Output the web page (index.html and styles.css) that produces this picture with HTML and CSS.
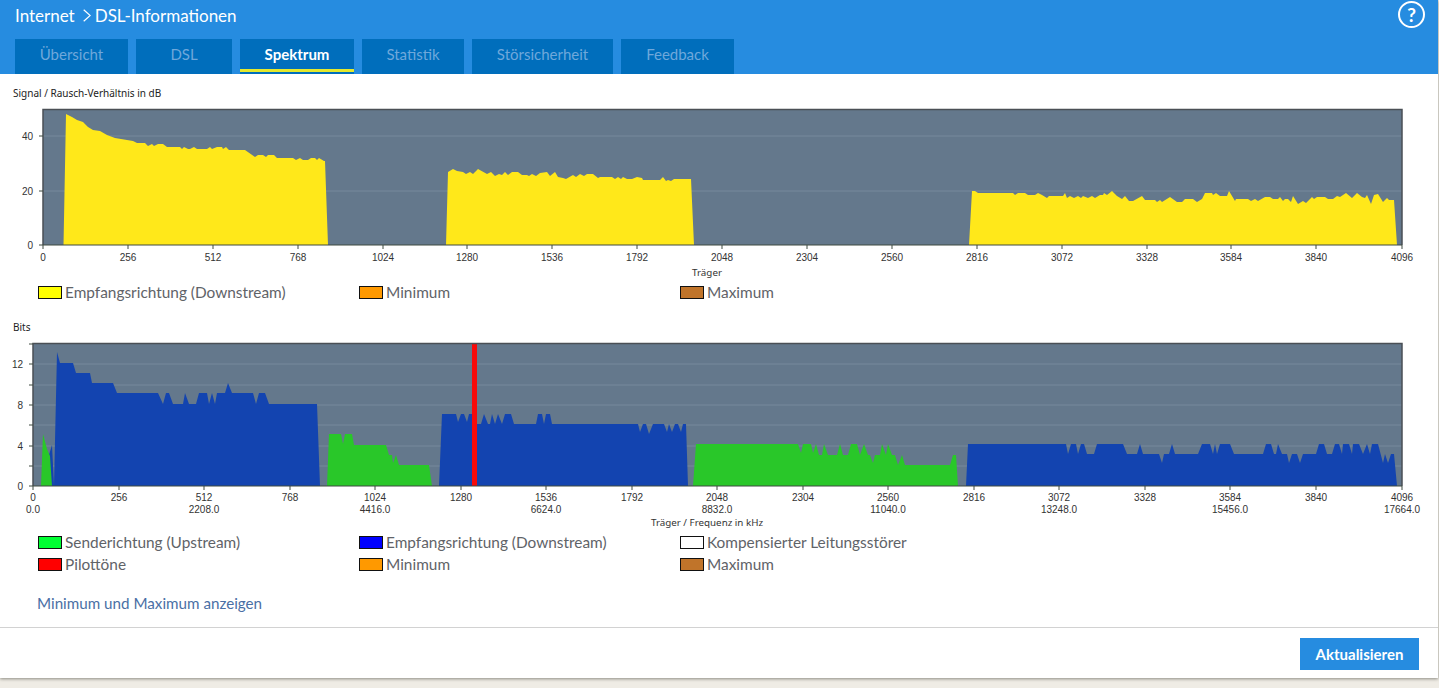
FILE: index.html
```html
<!DOCTYPE html>
<html lang="de">
<head>
<meta charset="utf-8">
<title>DSL-Informationen</title>
<link rel="stylesheet" href="styles.css">
</head>
<body>
<div class="card">
  <header class="head">
    <div class="title-row">
      <h1 class="crumbs"><span>Internet</span><svg class="chev" viewBox="0 0 8 13" width="8" height="13"><path d="M.7.7 7.2 6.5.7 12.3" fill="none" stroke="#fff" stroke-width="1.2"/></svg><span>DSL-Informationen</span></h1>
      <a class="help">?</a>
    </div>
    <nav class="tabs">
      <a class="tab">Übersicht</a>
      <a class="tab">DSL</a>
      <a class="tab active">Spektrum</a>
      <a class="tab">Statistik</a>
      <a class="tab">Störsicherheit</a>
      <a class="tab">Feedback</a>
    </nav>
  </header>
  <main class="content">
    <section class="chart-one">
      <div class="chart-title">Signal / Rausch-Verhältnis in dB</div>
      <svg class="plot plot-one" viewBox="0 102 1439 178" width="1439" height="178">
        <rect class="plot-bg" x="43" y="109" width="1359" height="136"/>
        <path class="grid" d="M43 191H1402M43 136H1402"/>
        <path class="yellow" d="M63.5 245 66 114 72 117 77 120 83 122 88 127 93 130 100 131 107 135 115 138 133 141 137 143 145 143 148 146 152 144 154 146 158 144 163 144 167 147 180 147 182 149 184 147 188 149 190 149 194 147 197 149 207 149 210 147 212 149 217 147 222 147 223 149 226 147 229 150 245 150 255 157 258 155 263 155 266 157 268 155 274 155 277 158 293 158 296 160 300 158 303 160 308 160 311 158 315 158 317 160 319 158 324 161 325 161 328 245Z"/>
        <path class="yellow" d="M446 245 448 172 453 169 457 171 463 172 466 174 470 172 473 174 478 169 487 174 491 172 495 176 499 174 502 175 505 172 508 175 512 172 518 172 522 175 527 175 529 176 532 174 536 176 540 173 547 172 550 176 555 172 558 177 563 178 566 179 573 175 576 177 580 174 584 176 587 174 593 174 598 178 600 177 612 177 615 179 618 177 621 179 623 177 627 179 632 179 637 177 642 178 643 180 660 180 663 177 666 181 668 180 671 181 674 179 691 179 694 245Z"/>
        <path class="yellow" d="M969 245 972 191 975 191 978 193 1013 193 1015 195 1018 193 1025 193 1028 195 1035 195 1038 193 1042 195 1047 198 1049 196 1063 196 1065 193 1067 198 1070 196 1074 198 1078 196 1081 198 1083 196 1088 198 1092 196 1095 198 1100 195 1103 195 1104 193 1107 195 1112 191 1117 196 1122 199 1125 196 1129 201 1133 201 1142 196 1145 200 1155 200 1157 202 1160 200 1162 202 1170 197 1177 202 1182 202 1185 199 1193 199 1197 202 1202 199 1205 193 1212 193 1213 195 1216 193 1220 196 1227 196 1229 191 1232 196 1235 201 1236 199 1248 199 1251 201 1255 199 1258 201 1265 197 1270 197 1273 199 1278 199 1280 197 1283 201 1285 199 1288 199 1291 202 1293 196 1298 204 1303 201 1306 203 1312 197 1314 199 1317 197 1325 197 1328 199 1333 199 1337 196 1340 197 1346 193 1352 198 1357 193 1362 197 1365 198 1367 195 1371 204 1374 195 1378 194 1383 202 1387 198 1389 200 1394 200 1397 245Z"/>
        <path class="frame" d="M43 245V109.5H1402V245"/>
        <path class="axis" d="M39 245H1402M39 191H43M39 136H43M43 245v4M128 245v4M213 245v4M298 245v4M383 245v4M467 245v4M552 245v4M637 245v4M722 245v4M807 245v4M892 245v4M977 245v4M1062 245v4M1147 245v4M1231 245v4M1316 245v4M1402 245v4"/>
        <g class="ylabels">
          <text x="33" y="140">40</text>
          <text x="33" y="195">20</text>
          <text x="33" y="249">0</text>
        </g>
        <g class="xlabels">
          <text x="43" y="261">0</text>
          <text x="128" y="261">256</text>
          <text x="213" y="261">512</text>
          <text x="298" y="261">768</text>
          <text x="383" y="261">1024</text>
          <text x="467" y="261">1280</text>
          <text x="552" y="261">1536</text>
          <text x="637" y="261">1792</text>
          <text x="722" y="261">2048</text>
          <text x="807" y="261">2304</text>
          <text x="892" y="261">2560</text>
          <text x="977" y="261">2816</text>
          <text x="1062" y="261">3072</text>
          <text x="1147" y="261">3328</text>
          <text x="1231" y="261">3584</text>
          <text x="1316" y="261">3840</text>
          <text x="1402" y="261">4096</text>
          <text class="axis-name" x="707" y="276">Träger</text>
        </g>
      </svg>
      <ul class="legend">
        <li class="legend-item"><i class="swatch sw-yellow"></i>Empfangsrichtung (Downstream)</li>
        <li class="legend-item"><i class="swatch sw-orange"></i>Minimum</li>
        <li class="legend-item"><i class="swatch sw-brown"></i>Maximum</li>
      </ul>
    </section>
    <section class="chart-two">
      <div class="chart-title">Bits</div>
      <svg class="plot plot-two" viewBox="0 336 1439 194" width="1439" height="194">
        <rect class="plot-bg" x="33" y="343" width="1369" height="143"/>
        <path class="grid" d="M33 466H1402M33 446H1402M33 425H1402M33 405H1402M33 385H1402M33 364H1402"/>
        <path class="blue" d="M46 486 49 455 52 445 54 486Z"/>
        <path class="green" d="M41 486 43 434 47 449 50 456 52 486Z"/>
        <path class="blue" d="M54 486 57 352 60 363 73 363 76 373 90 373 92 383 113 383 117 393 158 393 163 404 166 393 169 393 173 404 183 404 185 393 189 404 196 404 199 393 207 393 209 404 212 393 215 404 217 393 225 393 228 383 232 393 253 393 256 404 259 393 265 393 269 404 317 404 320 486Z"/>
        <path class="green" d="M327 486 329 434 341 434 343 444 345 434 352 434 354 445 386 445 389 455 392 455 393 463 396 455 399 465 429 465 432 486Z"/>
        <path class="blue" d="M439 486 442 414 456 414 458 422 461 414 464 414 467 422 469 414 473 414 477 424 481 424 484 414 488 424 490 424 492 414 495 424 498 414 502 424 505 414 511 414 514 424 536 424 538 414 542 414 544 424 546 414 550 414 552 424 638 424 640 432 643 424 646 424 649 434 653 424 664 424 667 432 669 424 672 432 675 424 678 424 681 432 683 424 686 424 688 486Z"/>
        <path class="green" d="M693 486 696 444 798 444 801 453 803 444 811 444 813 453 816 444 819 455 822 455 824 444 828 455 837 455 840 444 843 455 848 455 851 444 857 444 860 455 864 444 868 455 870 455 873 463 875 455 880 455 882 444 886 455 888 444 892 455 895 455 898 465 902 455 905 465 950 465 953 455 956 455 958 486Z"/>
        <path class="blue" d="M966 486 968 444 1066 444 1068 454 1071 444 1076 444 1078 454 1081 444 1084 444 1087 454 1094 454 1097 444 1123 444 1127 454 1137 454 1140 444 1143 454 1159 454 1162 463 1164 454 1169 454 1172 444 1175 454 1198 454 1202 444 1210 444 1213 454 1215 444 1217 454 1220 444 1230 444 1234 454 1263 454 1266 444 1271 444 1274 454 1276 454 1278 444 1282 454 1287 454 1289 463 1292 454 1297 454 1300 463 1303 454 1316 454 1319 444 1324 444 1327 454 1332 454 1335 444 1339 444 1342 454 1343 444 1349 444 1352 454 1353 444 1359 444 1363 454 1367 444 1370 454 1372 444 1378 444 1383 463 1385 454 1388 463 1391 454 1394 454 1397 486Z"/>
        <rect class="pilot" x="472" y="343" width="5" height="143"/>
        <path class="frame" d="M33 486V343.5H1402V486"/>
        <path class="axis" d="M29 486H1402M29 466H33M29 446H33M29 425H33M29 405H33M29 385H33M29 364H33M29 344H33M33 486v4M119 486v4M204 486v4M290 486v4M375 486v4M461 486v4M546 486v4M632 486v4M717 486v4M803 486v4M888 486v4M974 486v4M1059 486v4M1145 486v4M1230 486v4M1316 486v4M1402 486v4"/>
        <g class="ylabels">
          <text x="23" y="368">12</text>
          <text x="23" y="409">8</text>
          <text x="23" y="450">4</text>
          <text x="23" y="490">0</text>
        </g>
        <g class="xlabels">
          <text x="33" y="501">0</text>
          <text x="119" y="501">256</text>
          <text x="204" y="501">512</text>
          <text x="290" y="501">768</text>
          <text x="375" y="501">1024</text>
          <text x="461" y="501">1280</text>
          <text x="546" y="501">1536</text>
          <text x="632" y="501">1792</text>
          <text x="717" y="501">2048</text>
          <text x="803" y="501">2304</text>
          <text x="888" y="501">2560</text>
          <text x="974" y="501">2816</text>
          <text x="1059" y="501">3072</text>
          <text x="1145" y="501">3328</text>
          <text x="1230" y="501">3584</text>
          <text x="1316" y="501">3840</text>
          <text x="1402" y="501">4096</text>
          <text x="33" y="513">0.0</text>
          <text x="204" y="513">2208.0</text>
          <text x="375" y="513">4416.0</text>
          <text x="546" y="513">6624.0</text>
          <text x="717" y="513">8832.0</text>
          <text x="888" y="513">11040.0</text>
          <text x="1059" y="513">13248.0</text>
          <text x="1230" y="513">15456.0</text>
          <text x="1402" y="513">17664.0</text>
          <text class="axis-name" x="707" y="526">Träger / Frequenz in kHz</text>
        </g>
      </svg>
      <ul class="legend">
        <li class="legend-item"><i class="swatch sw-green"></i>Senderichtung (Upstream)</li>
        <li class="legend-item"><i class="swatch sw-blue"></i>Empfangsrichtung (Downstream)</li>
        <li class="legend-item"><i class="swatch sw-white"></i>Kompensierter Leitungsstörer</li>
        <li class="legend-item"><i class="swatch sw-red"></i>Pilottöne</li>
        <li class="legend-item"><i class="swatch sw-orange"></i>Minimum</li>
        <li class="legend-item"><i class="swatch sw-brown"></i>Maximum</li>
      </ul>
    </section>
    <a class="toggle">Minimum und Maximum anzeigen</a>
  </main>
  <footer class="foot">
    <button class="btn" type="button">Aktualisieren</button>
  </footer>
</div>
</body>
</html>
```
FILE: styles.css
```css
* { box-sizing: border-box; }
html, body { margin: 0; height: 688px; overflow: hidden; }
body {
  background: #efece5;
  font-family: "Lato", "Noto Sans", sans-serif;
  color: #5f6368;
}
.card {
  width: 1438px;
  height: 678px;
  background: #fff;
  box-shadow: 0 1px 3px rgba(60, 60, 50, .55);
  display: flex;
  flex-direction: column;
}
.head {
  flex: none;
  height: 74px;
  background: #268ce0;
  color: #fff;
  display: flex;
  flex-direction: column;
  justify-content: space-between;
}
.title-row {
  display: flex;
  justify-content: space-between;
  align-items: flex-start;
  padding: 0 15px;
}
.crumbs {
  margin: 5px 0 0;
  font-size: 17px;
  line-height: 21px;
  font-weight: 400;
  display: flex;
  align-items: center;
}
.chev { margin: 0 4px 0 8px; }
.help {
  width: 27px;
  height: 27px;
  margin: 1px -2px 0 0;
  border: 2px solid #fff;
  border-radius: 50%;
  font-size: 19px;
  line-height: 23px;
  font-weight: 700;
  text-align: center;
}
.tabs {
  display: grid;
  grid-template-columns: 113px 96px 114px 102px 141px 113px;
  gap: 8px;
  padding-left: 15px;
}
.tab {
  height: 35px;
  background: #006ebc;
  color: #6fa8db;
  font-size: 15px;
  line-height: 31px;
  text-align: center;
}
.active {
  color: #fff;
  font-weight: 700;
  position: relative;
}
.active::after {
  content: "";
  position: absolute;
  left: 0;
  right: 0;
  bottom: 2px;
  height: 3px;
  background: #e3e82e;
}
.content {
  flex: 1;
  min-height: 0;
  padding-top: 11px;
  display: flex;
  flex-direction: column;
}
.chart-title {
  height: 17px;
  padding-left: 13px;
  font-family: "Noto Sans", sans-serif;
  font-size: 10px;
  line-height: 17px;
  color: #222;
}
.plot { display: block; }
.plot-bg { fill: #64788c; }
.grid { fill: none; stroke: #76899c; stroke-width: 1; }
.yellow { fill: #ffe81a; }
.blue { fill: #1344b0; }
.green { fill: #29c729; }
.pilot { fill: #f80a0a; }
.frame { fill: none; stroke: #4a4f55; stroke-width: 1.5; }
.axis { fill: none; stroke: #3f4a40; stroke-width: 1; }
.plot text {
  font-family: "Liberation Sans", sans-serif;
  font-size: 10px;
  fill: #333;
}
.plot .axis-name {
  font-family: "Noto Sans", sans-serif;
  font-size: 9.8px;
}
.ylabels text { text-anchor: end; }
.xlabels text { text-anchor: middle; }
.legend {
  list-style: none;
  margin: 1px 0 0;
  padding: 0 0 0 38px;
  display: grid;
  grid-template-columns: repeat(3, 321px);
  grid-auto-rows: 22px;
}
.legend-item {
  display: flex;
  align-items: center;
  font-size: 15.4px;
  line-height: 22px;
  white-space: nowrap;
}
.swatch {
  width: 24px;
  height: 13px;
  margin-right: 3px;
  border: 1px solid #111;
}
.sw-yellow { background: #ffff00; }
.sw-orange { background: #ff9900; }
.sw-brown { background: #c0742a; }
.sw-green { background: #00ff33; }
.sw-blue { background: #0000ff; }
.sw-white { background: #fff; }
.sw-red { background: #ff0000; }
.chart-two { margin-top: 16px; }
.toggle {
  margin: 17px 0 0 37px;
  font-size: 15.2px;
  line-height: 22px;
  color: #4a6fa5;
}
.foot {
  flex: none;
  height: 51px;
  border-top: 1px solid #d2d2d2;
  display: flex;
  justify-content: flex-end;
  align-items: flex-start;
  padding: 10px 19px 0 0;
}
.btn {
  width: 119px;
  height: 32px;
  border: 0;
  background: #268ce0;
  color: #fff;
  font-family: inherit;
  font-size: 15px;
  font-weight: 700;
}
```
